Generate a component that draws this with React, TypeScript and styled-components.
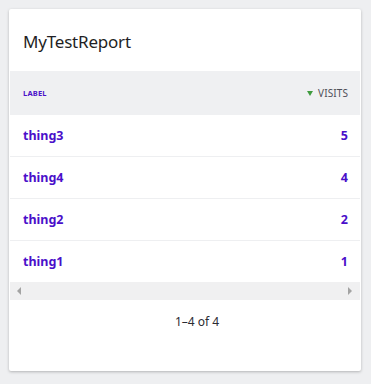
import styled, { createGlobalStyle } from "styled-components";

const GlobalStyle = createGlobalStyle`
  html, body {
    margin: 0;
    padding: 0;
    background: #eeeff1;
    font-family: "Noto Sans", "Open Sans", sans-serif;
  }
`;

const Page = styled.div`
  padding: 9px 10px 12px 9px;
`;

const Card = styled.div`
  width: 352px;
  height: 362px;
  background: #fff;
  border-radius: 2px;
  box-shadow: 0 1px 3px rgba(0, 0, 0, 0.25);
  display: flex;
  flex-direction: column;
  padding: 0 1px;
  box-sizing: border-box;
`;

const Title = styled.h2`
  margin: 0;
  height: 62px;
  display: flex;
  align-items: center;
  padding: 2px 0 0 13px;
  box-sizing: border-box;
  font-size: 17px;
  font-weight: 400;
  color: #1f1f24;
  letter-spacing: -0.2px;
`;

const HeaderRow = styled.div`
  height: 44px;
  background: #eff0f2;
  display: flex;
  align-items: center;
  justify-content: space-between;
  padding: 0 12px 0 13px;
`;

const LabelHead = styled.span`
  font-size: 7.5px;
  font-weight: 700;
  color: #4b12c9;
  letter-spacing: 0.2px;
`;

const SortHead = styled.span`
  display: flex;
  align-items: center;
  gap: 5px;
  font-size: 10px;
  color: #4f4f58;
  letter-spacing: 0.1px;
`;

const SortArrow = styled.span`
  width: 0;
  height: 0;
  border-left: 3.5px solid transparent;
  border-right: 3.5px solid transparent;
  border-top: 5px solid #3f9b3f;
`;

const Row = styled.div<{ $last?: boolean }>`
  height: 41px;
  display: flex;
  align-items: center;
  justify-content: space-between;
  padding: 0 12px 0 13px;
  border-bottom: ${(p) => (p.$last ? "none" : "1px solid #eeeff1")};
  font-size: 12.5px;
  font-weight: 700;
  color: #4a0fca;
`;

const ScrollBar = styled.div`
  height: 18px;
  background: #f0f0f1;
  display: flex;
  align-items: center;
  justify-content: space-between;
  padding: 0 8px 0 7px;
`;

const ScrollArrow = styled.span<{ $dir: "left" | "right" }>`
  width: 0;
  height: 0;
  border-top: 4px solid transparent;
  border-bottom: 4px solid transparent;
  ${(p) =>
    p.$dir === "left"
      ? "border-right: 4px solid #a3a3a3;"
      : "border-left: 4px solid #a3a3a3;"}
`;

const Pager = styled.div`
  padding: 13px 0 0 24px;
  text-align: center;
  font-size: 12px;
  color: #2b2b33;
`;

const rows = [
  { label: "thing3", visits: 5 },
  { label: "thing4", visits: 4 },
  { label: "thing2", visits: 2 },
  { label: "thing1", visits: 1 },
];

export default function App() {
  return (
    <Page>
      <GlobalStyle />
      <Card>
        <Title>MyTestReport</Title>
        <HeaderRow>
          <LabelHead>LABEL</LabelHead>
          <SortHead>
            <SortArrow />
            VISITS
          </SortHead>
        </HeaderRow>
        {rows.map((r, i) => (
          <Row key={r.label} $last={i === rows.length - 1}>
            <span>{r.label}</span>
            <span>{r.visits}</span>
          </Row>
        ))}
        <ScrollBar>
          <ScrollArrow $dir="left" />
          <ScrollArrow $dir="right" />
        </ScrollBar>
        <Pager>1–4 of 4</Pager>
      </Card>
    </Page>
  );
}
